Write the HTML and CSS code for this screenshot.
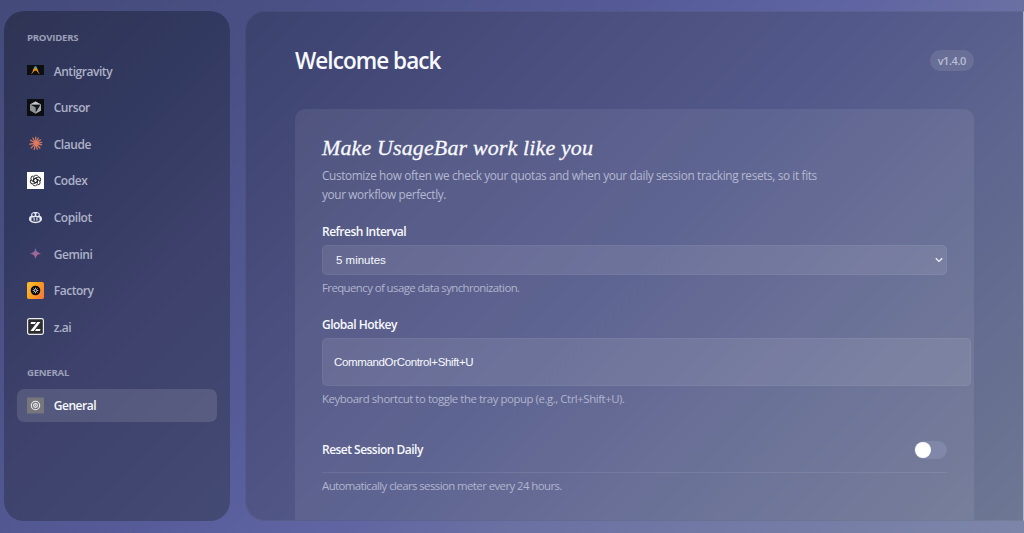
FILE: index.html
```html
<!DOCTYPE html>
<html lang="en">
<head>
  <meta charset="UTF-8">
  <meta name="viewport" content="width=device-width, initial-scale=1.0">
  <title>UsageBar Settings</title>
  <link rel="stylesheet" href="styles.css">
</head>
<body>
  <aside class="sidebar">
    <h2 class="nav-title">PROVIDERS</h2>
    <nav class="nav">
      <a class="nav-item">
        <svg class="icon" viewBox="0 0 17 17">
          <defs>
            <linearGradient id="arch" x1="0" y1="0" x2="0" y2="1">
              <stop offset="0" stop-color="#3d86c8"/>
              <stop offset="0.25" stop-color="#6f9a62"/>
              <stop offset="0.4" stop-color="#e0952a"/>
              <stop offset="1" stop-color="#d4801c"/>
            </linearGradient>
          </defs>
          <rect y="3" width="17" height="10" fill="#0c0e10"/>
          <path d="M3.800 12.200C6 10.800 6.600 3.900 8.500 3.900S11 10.800 13.200 12.200C11.200 12.200 10.200 8.600 8.500 8.600S5.800 12.200 3.800 12.200z" fill="url(#arch)"/>
        </svg>
        <span>Antigravity</span>
      </a>
      <a class="nav-item">
        <svg class="icon" viewBox="0 0 17 17">
          <rect width="17" height="17" fill="#0c0e12"/>
          <path d="M8.500 2.500l5.500 3v6l-5.500 3.200L3 11.500v-6z" fill="#8f9396"/>
          <path d="M8.500 2.500l5.500 3H3z" fill="#c4c6c8"/>
          <path d="M3.800 5.800h9.600L8.700 13.500V8.500z" fill="#14171a"/>
          <path d="M14 5.500v6l-5.300 3z" fill="#a9acae"/>
        </svg>
        <span>Cursor</span>
      </a>
      <a class="nav-item">
        <svg class="icon" viewBox="0 0 17 17">
          <g stroke="#dd7a5f" stroke-width="1.200" stroke-linecap="round">
            <path d="M8.700 8.300V2.200M8.700 8.300l2.600-5.300M8.700 8.300l4.800-3.500M8.700 8.300l6-.9M8.700 8.300l6 1.500M8.700 8.300l4.200 4.700M8.700 8.300l1.600 6M8.700 8.300l-1.500 6.200M8.700 8.300l-4.500 4.500M8.700 8.300l-6 .8M8.700 8.300L3.500 5.200M8.700 8.300L5.800 3"/>
          </g>
        </svg>
        <span>Claude</span>
      </a>
      <a class="nav-item">
        <svg class="icon" viewBox="0 0 17 17">
          <rect width="17" height="17" fill="#fff"/>
          <g fill="none" stroke="#222" stroke-width="0.900">
            <path id="petal" d="M8.500 6.400l1.900 1.100v3.800a2.500 2.500 0 0 1-4.700 1.200"/>
            <use href="#petal" transform="rotate(60 8.500 8.500)"/>
            <use href="#petal" transform="rotate(120 8.500 8.500)"/>
            <use href="#petal" transform="rotate(180 8.500 8.500)"/>
            <use href="#petal" transform="rotate(240 8.500 8.500)"/>
            <use href="#petal" transform="rotate(300 8.500 8.500)"/>
          </g>
        </svg>
        <span>Codex</span>
      </a>
      <a class="nav-item">
        <svg class="icon" viewBox="0 0 17 17">
          <path d="M4.200 6.700C4 3.700 5.500 3 8.500 3s4.500.700 4.300 3.700c1.700.600 2.200 1.800 2.200 3.600 0 2-3 3.900-6.500 3.900S2 12.300 2 10.300c0-1.800.500-3 2.200-3.600z" fill="#e8eaf4"/>
          <rect x="5.300" y="4.300" width="2.500" height="2.800" rx="1" fill="#353d64"/>
          <rect x="9.200" y="4.300" width="2.500" height="2.800" rx="1" fill="#353d64"/>
          <path d="M4.500 8.500c2 .3 3.200 0 4-.8.800.8 2 1.100 4 .8v3.200c-2.200 1.500-5.800 1.500-8 0z" fill="#353d64"/>
          <path d="M7.100 9.300v2M9.900 9.300v2" stroke="#e8eaf4" stroke-width="1.100" stroke-linecap="round"/>
        </svg>
        <span>Copilot</span>
      </a>
      <a class="nav-item">
        <svg class="icon" viewBox="0 0 17 17">
          <defs>
            <linearGradient id="spark" x1="0" y1="0" x2="1" y2="1">
              <stop offset="0.200" stop-color="#6a6bb0"/>
              <stop offset="0.550" stop-color="#a8668f"/>
              <stop offset="1" stop-color="#a05c82"/>
            </linearGradient>
          </defs>
          <path d="M8.500 2.800c.7 3.500 2 5 5.700 5.700-3.700.7-5 2.200-5.700 5.700-.7-3.500-2-5-5.700-5.700 3.700-.7 5-2.200 5.700-5.700z" fill="url(#spark)"/>
        </svg>
        <span>Gemini</span>
      </a>
      <a class="nav-item">
        <svg class="icon" viewBox="0 0 17 17">
          <defs>
            <linearGradient id="sun" x1="0" y1="0" x2="1" y2="0.600">
              <stop offset="0" stop-color="#fcc03a"/>
              <stop offset="0.500" stop-color="#fba21d"/>
              <stop offset="1" stop-color="#f87f35"/>
            </linearGradient>
          </defs>
          <rect width="17" height="17" rx="1.800" fill="url(#sun)"/>
          <circle cx="8.500" cy="8.500" r="4.800" fill="#0b0908"/>
          <path d="M8.500 5.700v5.600M5.700 8.500h5.600M6.500 6.500l4 4M10.500 6.500l-4 4" stroke="#e8e8e8" stroke-width="0.800"/>
          <circle cx="8.500" cy="8.500" r="0.900" fill="#0b0908"/>
        </svg>
        <span>Factory</span>
      </a>
      <a class="nav-item">
        <svg class="icon" viewBox="0 0 17 17">
          <rect x="0.600" y="0.600" width="15.800" height="15.800" rx="1.800" fill="#2b2c2e" stroke="#eceef2" stroke-width="1.200"/>
          <path d="M4 4h5L7.800 5.900H3.600zM10.300 4h3.200L6.700 13H3.400zM9.200 11.100h4.300L13 13H8z" fill="#fff"/>
        </svg>
        <span>z.ai</span>
      </a>
    </nav>

    <h2 class="nav-title general">GENERAL</h2>
    <nav class="nav">
      <a class="nav-item active">
        <svg class="icon" viewBox="0 0 17 17">
          <rect y="0.500" width="17" height="16" fill="#77767d"/>
          <g fill="none" stroke="#eeeef2" stroke-width="1.100">
            <circle cx="8.500" cy="8.500" r="4.200"/>
            <circle cx="8.500" cy="8.500" r="1.900"/>
          </g>
          <circle cx="8.500" cy="8.500" r="0.600" fill="#eeeef2"/>
        </svg>
        <span>General</span>
      </a>
    </nav>
  </aside>

  <main class="content">
    <header class="header">
      <h1>Welcome back</h1>
      <span class="version">v1.4.0</span>
    </header>

    <section class="card">
      <h3>Make UsageBar work like you</h3>
      <p class="intro">Customize how often we check your quotas and when your daily session tracking resets, so it fits<br>your workflow perfectly.</p>

      <div class="field">
        <label for="interval">Refresh Interval</label>
        <div class="select-wrap">
          <select id="interval">
            <option>5 minutes</option>
          </select>
          <svg class="chevron" viewBox="0 0 8 6">
            <path d="M0.800 1.200L4 4.400l3.200-3.200" fill="none" stroke="#f4f5fb" stroke-width="1.300"/>
          </svg>
        </div>
        <p class="hint">Frequency of usage data synchronization.</p>
      </div>

      <div class="field hotkey">
        <label for="hotkey">Global Hotkey</label>
        <input type="text" id="hotkey" value="CommandOrControl+Shift+U">
        <p class="hint">Keyboard shortcut to toggle the tray popup (e.g., Ctrl+Shift+U).</p>
      </div>

      <div class="toggle-row">
        <label>Reset Session Daily</label>
        <span class="toggle"></span>
      </div>
      <p class="hint">Automatically clears session meter every 24 hours.</p>
    </section>
  </main>
</body>
</html>
```
FILE: styles.css
```css
* {
  box-sizing: border-box;
}

body {
  font-family: 'Open Sans', 'Noto Sans', sans-serif;
  background: linear-gradient(135deg, #444a7a 0%, #4a5084 19%, #575c9a 44%, #5f64a2 55%, #6a70a2 66%, #7d86a9 100%);
  display: flex;
  gap: 15px;
  height: 533px;
  margin: 0;
  padding: 11px 0 12px 4px;
  overflow: hidden;
  color: #f8f9fe;
}

h1, h2, h3, p {
  margin: 0;
}

.sidebar {
  width: 226px;
  flex-shrink: 0;
  padding: 20px 13px;
  border-radius: 20px;
  background: linear-gradient(135deg, #2f3454 0%, #323960 30%, #3d416b 58%, #434a73 100%);
}

.nav-title {
  padding-left: 10px;
  font-size: 9.600px;
  line-height: 14px;
  font-weight: 700;
  letter-spacing: -0.250px;
  color: #9ca0b8;
}

.nav-title.general {
  margin-top: 22px;
}

.nav {
  display: flex;
  flex-direction: column;
  gap: 3px;
  margin-top: 8.900px;
}

.nav-item {
  display: flex;
  align-items: center;
  gap: 9.700px;
  height: 33.600px;
  padding-left: 10px;
  border-radius: 7px;
  font-size: 12px;
  font-weight: 600;
  letter-spacing: -0.450px;
  color: #aeb2c8;
}

.nav-item span {
  padding-top: 1px;
}

.nav-item.active {
  background: rgba(255, 255, 255, 0.120);
  color: #f8f9fe;
}

.icon {
  width: 17px;
  height: 17px;
}

.content {
  flex: 1;
  padding: 0 49px 0 49px;
  border: 1px solid rgba(255, 255, 255, 0.050);
  border-right: 1px solid #b4b7ca;
  border-radius: 20px 0 0 20px;
  background: linear-gradient(135deg, #3c426e 0%, #4a4f7f 28%, #53598a 50%, #5e658f 68%, #6e7793 100%);
  background-origin: border-box;
  overflow: hidden;
}

.header {
  display: flex;
  justify-content: space-between;
  align-items: center;
  height: 97px;
}

h1 {
  font-size: 22.500px;
  font-weight: 600;
  letter-spacing: -0.950px;
}

.version {
  height: 21px;
  padding: 0 8px;
  border-radius: 11px;
  background: rgba(255, 255, 255, 0.100);
  font-size: 11px;
  line-height: 21px;
  font-weight: 600;
  letter-spacing: -0.400px;
  color: #b9bdd2;
}

.card {
  height: 440px;
  padding: 25px 27px;
  border-radius: 10px;
  background: rgba(255, 255, 255, 0.075);
}

h3 {
  font-family: 'Liberation Serif', serif;
  font-size: 22px;
  line-height: 27px;
  font-style: italic;
  font-weight: 400;
  letter-spacing: 0.130px;
  -webkit-text-stroke: 0.300px #f8f9fe;
}

.intro {
  margin-top: 5px;
  font-size: 11.800px;
  line-height: 19px;
  letter-spacing: -0.360px;
  color: #b4b8d0;
}

label {
  display: block;
  font-size: 12px;
  line-height: 17px;
  font-weight: 600;
  letter-spacing: -0.520px;
}

.field {
  margin-top: 19px;
}

.field.hotkey {
  margin-top: 20px;
}

select,
input {
  display: block;
  width: 100%;
  margin-top: 5px;
  border: 1px solid rgba(255, 255, 255, 0.050);
  border-radius: 5px;
  background: rgba(255, 255, 255, 0.090);
  font-family: 'Liberation Sans', Arial, sans-serif;
  font-size: 11.500px;
  color: #f8f9fe;
}

.select-wrap {
  position: relative;
}

select {
  appearance: none;
  height: 30px;
  padding: 0 0 0 13px;
}

.chevron {
  position: absolute;
  top: 12px;
  right: 4px;
  width: 8px;
  height: 6px;
}

input {
  box-sizing: content-box;
  height: 46px;
  padding: 0 11px;
  letter-spacing: -0.350px;
}

.hint {
  margin-top: 5px;
  font-size: 11.400px;
  line-height: 16px;
  letter-spacing: -0.570px;
  color: #b1b5ce;
}

.hotkey .hint {
  letter-spacing: -0.440px;
}

.toggle-row {
  display: flex;
  justify-content: space-between;
  align-items: center;
  height: 46px;
  margin-top: 20px;
  border-bottom: 1px solid rgba(255, 255, 255, 0.090);
}

.toggle {
  width: 33px;
  height: 18px;
  padding: 1px;
  border-radius: 9px;
  background: rgba(180, 190, 230, 0.200);
}

.toggle::before {
  content: '';
  display: block;
  width: 16px;
  height: 16px;
  border-radius: 50%;
  background: #fff;
}
```
